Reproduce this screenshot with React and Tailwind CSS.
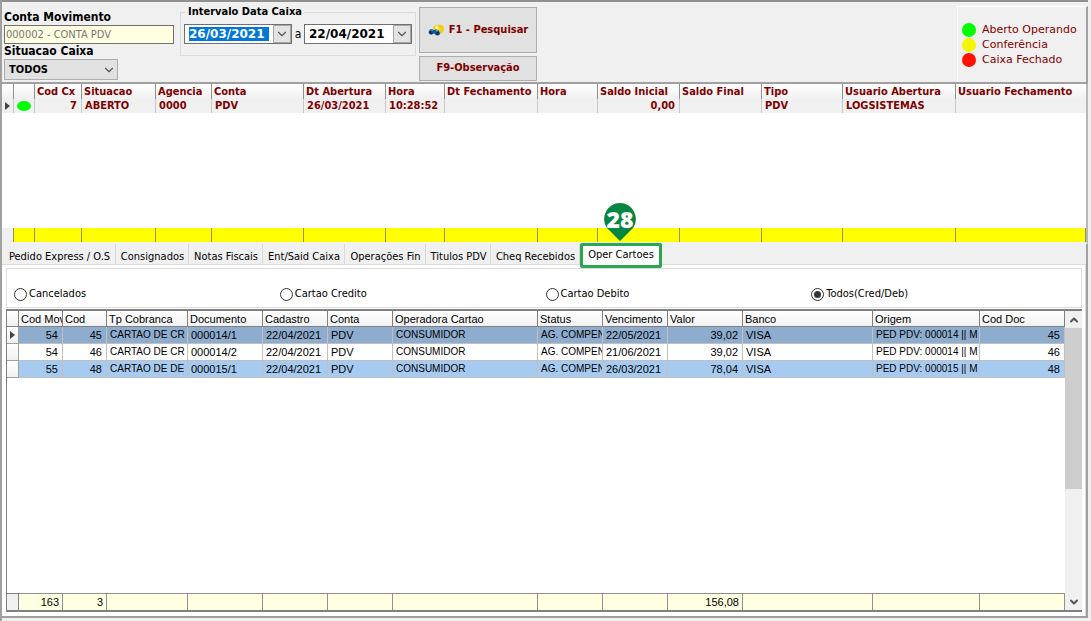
import { ChevronDown, ChevronUp } from 'lucide-react';

const caixaColumns = [
  { label: '', width: 'w-[12px]' },
  { label: '', width: 'w-[21px]' },
  { label: 'Cod Cx', width: 'w-[47px]', value: '7', right: true },
  { label: 'Situacao', width: 'w-[74px]', value: 'ABERTO' },
  { label: 'Agencia', width: 'w-[56px]', value: '0000' },
  { label: 'Conta', width: 'w-[92px]', value: 'PDV' },
  { label: 'Dt Abertura', width: 'w-[82px]', value: '26/03/2021' },
  { label: 'Hora', width: 'w-[59px]', value: '10:28:52' },
  { label: 'Dt Fechamento', width: 'w-[93px]', value: '' },
  { label: 'Hora', width: 'w-[60px]', value: '' },
  { label: 'Saldo Inicial', width: 'w-[82px]', value: '0,00', right: true },
  { label: 'Saldo Final', width: 'w-[82px]', value: '' },
  { label: 'Tipo', width: 'w-[81px]', value: 'PDV' },
  { label: 'Usuario Abertura', width: 'w-[113px]', value: 'LOGSISTEMAS' },
  { label: 'Usuario Fechamento', width: 'w-auto', value: '' },
];

const cartaoColumns = [
  { label: 'Cod Mov', width: 'w-[44px]', right: true, total: '163' },
  { label: 'Cod', width: 'w-[44px]', right: true, total: '3' },
  { label: 'Tp Cobranca', width: 'w-[81px]', small: true },
  { label: 'Documento', width: 'w-[75px]' },
  { label: 'Cadastro', width: 'w-[65px]' },
  { label: 'Conta', width: 'w-[65px]' },
  { label: 'Operadora Cartao', width: 'w-[145px]', small: true },
  { label: 'Status', width: 'w-[65px]', small: true },
  { label: 'Vencimento', width: 'w-[65px]' },
  { label: 'Valor', width: 'w-[75px]', right: true, total: '156,08' },
  { label: 'Banco', width: 'w-[130px]' },
  { label: 'Origem', width: 'w-[107px]', small: true },
  { label: 'Cod Doc', width: 'w-auto', right: true },
];

const cartaoRows = [
  {
    color: 'bg-[#8eacce]',
    current: true,
    cells: ['54', '45', 'CARTAO DE CR', '000014/1', '22/04/2021', 'PDV', 'CONSUMIDOR', 'AG. COMPEN', '22/05/2021', '39,02', 'VISA', 'PED PDV: 000014 || M', '45'],
  },
  {
    color: 'bg-white',
    cells: ['54', '46', 'CARTAO DE CR', '000014/2', '22/04/2021', 'PDV', 'CONSUMIDOR', 'AG. COMPEN', '21/06/2021', '39,02', 'VISA', 'PED PDV: 000014 || M', '46'],
  },
  {
    color: 'bg-[#a6caf0]',
    cells: ['55', '48', 'CARTAO DE DE', '000015/1', '22/04/2021', 'PDV', 'CONSUMIDOR', 'AG. COMPEN', '26/03/2021', '78,04', 'VISA', 'PED PDV: 000015 || M', '48'],
  },
];

const tabs = [
  { label: 'Pedido Express / O.S', width: 'w-[113px]' },
  { label: 'Consignados', width: 'w-[73px]' },
  { label: 'Notas Fiscais', width: 'w-[74px]' },
  { label: 'Ent/Said Caixa', width: 'w-[82px]' },
  { label: 'Operações Fin', width: 'w-[81px]' },
  { label: 'Titulos PDV', width: 'w-[65px]' },
  { label: 'Cheq Recebidos', width: 'w-[89px]' },
];

const filters = ['Cancelados', 'Cartao Credito', 'Cartao Debito', 'Todos(Cred/Deb)'];

const statuses = [
  { label: 'Aberto Operando', color: 'bg-[#00ff00]' },
  { label: 'Conferência', color: 'bg-[#f5f500]' },
  { label: 'Caixa Fechado', color: 'bg-[#ff1000]' },
];

function RowMarker() {
  return (
    <svg viewBox="0 0 5 8" className="mx-auto h-2 w-[5px]">
      <path d="M0 0 5 4 0 8Z" fill="#444" />
    </svg>
  );
}

function BinocularsIcon() {
  return (
    <svg viewBox="0 0 17 13" className="h-[13px] w-[17px]">
      <path d="M5 4Q6 .5 9 1.5Q10 0 13 .8Q16.5 1.5 16 5Q16 8 13 10L9 10Z" fill="#f2cf1d" />
      <path d="M7 3Q8 1.5 10 2.5L11 5 8 6Z" fill="#fff2a0" />
      <path d="M1 7Q2 4.5 4 5L6 6 8 5.5Q10 5 11 7L12 9Q12 11.5 9.5 11.5Q7.5 11.5 7 10L5.5 9.5Q4.5 11 2.5 10.5Q.5 10 .5 8Z" fill="#12598c" />
      <circle cx="3" cy="8.5" r="1.3" fill="#0a2f57" />
      <circle cx="9.5" cy="9.5" r="1.4" fill="#0a2f57" />
      <path d="M3 6h2M8 6.7h2" stroke="#64b4df" strokeWidth="1" />
    </svg>
  );
}

function DateField({ label, value, selected }) {
  return (
    <div className="flex h-[20px] w-[108px] items-center border border-[#707070] bg-white pl-1">
      <input
        aria-label={label}
        defaultValue={value}
        className={`h-[14px] min-w-0 flex-1 font-["DejaVu_Sans",sans-serif] text-[12px] leading-[14px] font-bold outline-none ${
          selected ? 'bg-[#0078d7] text-white' : 'text-black'
        }`}
      />
      <button
        type="button"
        aria-label={`Abrir ${label}`}
        className="ml-1 flex h-[18px] w-[18px] items-center justify-center border border-[#a8a8a8] bg-[#e3e3e3]"
      >
        <ChevronDown size={14} strokeWidth={2} color="#555" />
      </button>
    </div>
  );
}

function SearchPanel() {
  return (
    <header className="flex h-[82px] border-b-2 border-[#a0a0a0] pt-1 pl-[2px]">
      <div className="w-[170px] text-[12px] leading-[14px] font-bold">
        <label htmlFor="conta" className="block pt-1 pb-px">Conta Movimento</label>
        <input
          id="conta"
          readOnly
          value="000002 - CONTA PDV"
          className="block h-[19px] w-full border border-[#707070] bg-[#ffffe1] pl-px text-[11px] font-normal text-[#777] outline-none"
        />
        <label htmlFor="situacao" className="block pb-px">Situacao Caixa</label>
        <div className="relative w-[114px]">
          <select
            id="situacao"
            className="block h-[21px] w-full appearance-none border border-[#adadad] bg-[#e1e1e1] pl-1 text-[11px] font-bold outline-none"
          >
            <option>TODOS</option>
          </select>
          <ChevronDown size={14} color="#555" className="pointer-events-none absolute top-1 right-[2px]" />
        </div>
      </div>

      <fieldset className="ml-[6px] h-[50px] w-[236px] border border-[#dcdcdc] px-[3px]">
        <legend className="ml-[2px] px-[2px] text-[11px] leading-[12px] font-bold">Intervalo Data Caixa</legend>
        <div className="flex items-center justify-between pt-[6px] text-[12px]">
          <DateField label="data inicial" value="26/03/2021" selected />
          <span>a</span>
          <DateField label="data final" value="22/04/2021" />
        </div>
      </fieldset>

      <div className="ml-[3px] flex w-[118px] flex-col gap-[3px] pt-px text-[11px] font-bold text-[#800000]">
        <button type="button" className="flex h-[46px] items-center justify-center gap-1 border border-[#adadad] bg-[#e1e1e1] whitespace-nowrap">
          <BinocularsIcon />
          F1 - Pesquisar
        </button>
        <button type="button" className="h-[25px] border border-[#adadad] bg-[#e1e1e1]">F9-Observação</button>
      </div>

      <ul className="ml-auto flex w-[131px] flex-col justify-center border-t border-r-2 border-l border-t-white border-r-[#a0a0a0] border-l-white pl-1 font-['DejaVu_Sans',sans-serif] text-[11px] leading-[15px] whitespace-nowrap text-[#800000]">
        {statuses.map((status) => (
          <li key={status.label} className="flex items-center gap-[6px]">
            <span className={`size-[14px] rounded-full ${status.color}`} />
            {status.label}
          </li>
        ))}
      </ul>
    </header>
  );
}

function CaixaColumns() {
  return (
    <colgroup>
      {caixaColumns.map((col, i) => (
        <col key={i} className={col.width} />
      ))}
    </colgroup>
  );
}

function CaixaGrid() {
  return (
    <section className="flex h-[160px] flex-col border-r-2 border-b-2 border-r-[#b8b8b8] border-b-[#f0f0f0] bg-white">
      <table className="w-full table-fixed border-separate border-spacing-0 text-[11px] font-bold whitespace-nowrap text-[#800000]">
        <CaixaColumns />
        <thead>
          <tr className="bg-linear-to-b from-white to-[#f0f0f0]">
            {caixaColumns.map((col, i) => (
              <th key={i} className="h-[15px] overflow-hidden border-r border-[#909090] p-0 pl-[2px] text-left leading-[15px] last:border-r-0">
                {col.label}
              </th>
            ))}
          </tr>
        </thead>
        <tbody>
          <tr className="bg-[#f0f0f0]">
            {caixaColumns.map((col, i) => (
              <td
                key={i}
                className={`h-[14px] overflow-hidden border-r border-[#c8c8c8] p-0 leading-[14px] last:border-r-0 ${
                  col.right ? 'pr-1 text-right' : i > 1 ? 'pl-[3px]' : ''
                }`}
              >
                {i === 0 && <RowMarker />}
                {i === 1 && <span className="mx-auto block h-[10px] w-[14px] rounded-[50%] bg-[#00ff00]" />}
                {col.value}
              </td>
            ))}
          </tr>
        </tbody>
      </table>
      <div className="flex-1" />
      <table className="w-full table-fixed border-separate border-spacing-0">
        <CaixaColumns />
        <tbody>
          <tr>
            {caixaColumns.map((col, i) => (
              <td key={i} className="h-[14px] border-r border-[#909060] bg-[#ffff00] p-0 first:bg-[#f0f0f0]" />
            ))}
          </tr>
        </tbody>
      </table>
    </section>
  );
}

function TabBar() {
  return (
    <nav className="flex h-[21px] border-b border-[#dcdcdc] bg-[#f0f0f0] pl-px text-[11px]">
      {tabs.map((tab) => (
        <button key={tab.label} type="button" className={`h-5 border-r border-[#d9d9d9] pt-[5px] pl-px whitespace-nowrap ${tab.width}`}>
          {tab.label}
        </button>
      ))}
      <button
        type="button"
        className="relative z-10 -mt-px h-[25px] w-[82px] rounded-[2px] border-3 border-[#2ba84f] bg-white pb-px whitespace-nowrap"
      >
        Oper Cartoes
        <span className="absolute -top-[43px] left-[21px] h-[38px] w-8 font-['Open_Sans',sans-serif] text-[23px] leading-[32px] font-extrabold text-white">
          <svg viewBox="0 0 32 38" className="absolute inset-0 h-[38px] w-8">
            <path d="M16 0A16 16 0 0 1 29 25L16 38 3 25A16 16 0 0 1 16 0Z" fill="#078641" />
          </svg>
          <span className="relative">28</span>
        </span>
      </button>
    </nav>
  );
}

function CartaoColumns() {
  return (
    <colgroup>
      <col className="w-[12px]" />
      {cartaoColumns.map((col) => (
        <col key={col.label} className={col.width} />
      ))}
    </colgroup>
  );
}

function CartaoGrid() {
  return (
    <div className="flex flex-1 border-t-2 border-b-2 border-l border-[#808080] bg-white font-['Liberation_Sans',Arial,sans-serif] text-[11px] whitespace-nowrap">
      <div className="flex min-w-0 flex-1 flex-col">
        <table className="w-full table-fixed border-separate border-spacing-0">
          <CartaoColumns />
          <thead>
            <tr className="bg-linear-to-b from-white to-[#f0f0f0]">
              <th className="border-r border-b border-[#808080] p-0" />
              {cartaoColumns.map((col) => (
                <th key={col.label} className="h-[16px] overflow-hidden border-r border-b border-[#808080] p-0 pl-[2px] text-left leading-[14px] font-normal">
                  {col.label}
                </th>
              ))}
            </tr>
          </thead>
          <tbody>
            {cartaoRows.map((row, r) => (
              <tr key={r} className={row.color}>
                <td className="border-r border-b border-[#a0a0a0] bg-linear-to-b from-white to-[#f0f0f0] p-0">
                  {row.current && <RowMarker />}
                </td>
                {row.cells.map((cell, i) => (
                  <td
                    key={i}
                    className={`h-[17px] overflow-hidden border-r border-b border-[#c0c0c0] p-0 leading-[16px] ${
                      cartaoColumns[i].right ? 'pr-1 text-right' : 'pl-[3px]'
                    } ${cartaoColumns[i].small ? 'text-[10px]' : ''}`}
                  >
                    {cell}
                  </td>
                ))}
              </tr>
            ))}
          </tbody>
        </table>
        <div className="flex-1" />
        <table className="w-full table-fixed border-separate border-spacing-0">
          <CartaoColumns />
          <tbody>
            <tr className="bg-[#ffffe1]">
              <td className="border-t border-r border-[#808080] bg-[#f0f0f0] p-0" />
              {cartaoColumns.map((col) => (
                <td key={col.label} className="h-[17px] border-t border-r border-[#909090] p-0 pr-[3px] text-right leading-[16px]">
                  {col.total}
                </td>
              ))}
            </tr>
          </tbody>
        </table>
      </div>
      <div className="flex w-[17px] flex-col bg-[#f0f0f0]">
        <button type="button" aria-label="Subir" className="flex h-[17px] items-center justify-center">
          <ChevronUp size={12} strokeWidth={4} color="#555" />
        </button>
        <div className="h-[161px] bg-[#cdcdcd]" />
        <button type="button" aria-label="Descer" className="mt-auto flex h-[17px] items-center justify-center">
          <ChevronDown size={12} strokeWidth={4} color="#555" />
        </button>
      </div>
    </div>
  );
}

function App() {
  return (
    <div className="flex min-h-screen flex-col border-l-2 border-[#a0a0a0] bg-[#f0f0f0] pr-[3px] pb-[3px] font-['DejaVu_Sans_Condensed','DejaVu_Sans',sans-serif] text-[11px] text-black">
      <div className="h-[2px] bg-[#909090]" />
      <SearchPanel />
      <CaixaGrid />
      <main className="flex flex-1 flex-col border-r-2 border-b-2 border-[#a0a0a0]">
        <TabBar />
        <div className="flex flex-1 flex-col border-r border-[#dcdcdc] bg-white pt-[3px] pr-[3px] pb-1 pl-1">
          <div className="mb-px grid h-[40px] grid-cols-4 items-center border border-[#dcdcdc] pt-3 pr-1 pl-[7px]">
            {filters.map((filter) => (
              <label key={filter} className="flex items-center gap-[2px]">
                <input
                  type="radio"
                  name="filtro"
                  defaultChecked={filter === 'Todos(Cred/Deb)'}
                  className="size-[13px] appearance-none rounded-full border border-[#333] bg-white bg-clip-content p-[2px] checked:bg-[#333]"
                />
                {filter}
              </label>
            ))}
          </div>
          <CartaoGrid />
        </div>
      </main>
    </div>
  );
}

export default App;
